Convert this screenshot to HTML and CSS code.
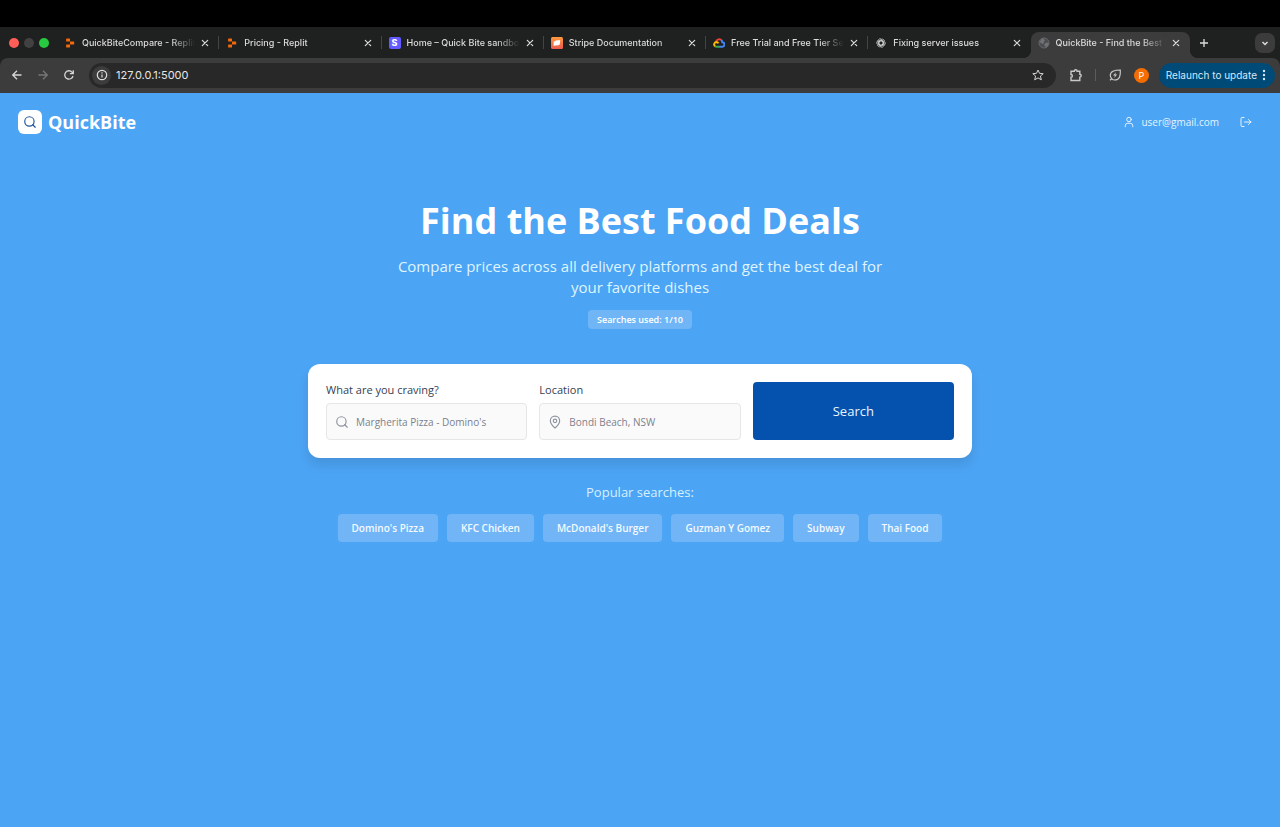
FILE: index.html
```html
<!DOCTYPE html>
<html lang="en">
<head>
<meta charset="utf-8">
<title>QuickBite - Find the Best Food Deals</title>
<link rel="stylesheet" href="styles.css">
</head>
<body>
<svg class="defs" aria-hidden="true">
  <symbol id="close" viewBox="0 0 10 10"><path d="M2.300 2.300l5.400 5.400M7.700 2.300L2.300 7.700" stroke="currentColor" stroke-width="1.200" stroke-linecap="round"/></symbol>
  <symbol id="replit" viewBox="0 0 12 12"><path d="M2.600 1.500h2.900q.5 0 .5.5v2.500H2.600q-.5 0-.5-.5V2q0-.5.5-.5zM6 4.500h3.700q.5 0 .5.500v2q0 .5-.5.5H6zM2.600 7.500H6V10q0 .5-.5.5H2.600q-.5 0-.5-.5V8q0-.5.5-.5z" fill="#f2680c"/></symbol>
  <symbol id="search" viewBox="0 0 24 24"><circle cx="11" cy="11" r="8"/><path d="M21 21l-4.300-4.300"/></symbol>
</svg>
<div class="browser">
  <div class="tabstrip">
    <div class="lights"><i class="light red"></i><i class="light gray"></i><i class="light green"></i></div>
    <div class="tabs">
      <div class="tab"><svg class="fav"><use href="#replit"/></svg><span class="title">QuickBiteCompare - Replit</span><button class="x" aria-label="Close tab"><svg><use href="#close"/></svg></button></div>
      <div class="tab"><svg class="fav"><use href="#replit"/></svg><span class="title">Pricing - Replit</span><button class="x" aria-label="Close tab"><svg><use href="#close"/></svg></button></div>
      <div class="tab"><span class="fav stripe">S</span><span class="title">Home – Quick Bite sandbo</span><button class="x" aria-label="Close tab"><svg><use href="#close"/></svg></button></div>
      <div class="tab"><svg class="fav" viewBox="0 0 12 12"><defs><linearGradient id="og" x2="0" y2="1"><stop stop-color="#ff9a3d"/><stop offset="1" stop-color="#ee5b50"/></linearGradient></defs><rect width="12" height="12" rx="1.500" fill="url(#og)"/><path d="M2.800 4.600l1.600-.3.400-.8 4.400-.4-.4 4.400-1.500.8-4.800.4z" fill="#fff"/></svg><span class="title">Stripe Documentation</span><button class="x" aria-label="Close tab"><svg><use href="#close"/></svg></button></div>
      <div class="tab"><svg class="fav" viewBox="0 0 12 12" fill="none" stroke-width="2"><path d="M3 4.800A3.300 3.300 0 0 1 8 2.900" stroke="#ea4335"/><path d="M8 2.900a3.200 3.200 0 0 1 1.300 2.300A2.200 2.200 0 0 1 9 9.700H6" stroke="#4285f4"/><path d="M6 9.700H3.500A2.300 2.300 0 0 1 2 9.200" stroke="#34a853"/><path d="M2 9.200A2.400 2.400 0 0 1 3.300 5q1.500 0 2.200 1.400" stroke="#fbbc04"/></svg><span class="title">Free Trial and Free Tier Se</span><button class="x" aria-label="Close tab"><svg><use href="#close"/></svg></button></div>
      <div class="tab"><svg class="fav" viewBox="0 0 24 24" fill="none" stroke="#d5d5d5" stroke-width="1.500"><path id="petal" d="M12 7.200l4.200 2.400v6.600l-5 2.900a4.300 4.300 0 0 1-6.300-4"/><use href="#petal" transform="rotate(60 12 12)"/><use href="#petal" transform="rotate(120 12 12)"/><use href="#petal" transform="rotate(180 12 12)"/><use href="#petal" transform="rotate(240 12 12)"/><use href="#petal" transform="rotate(300 12 12)"/></svg><span class="title">Fixing server issues</span><button class="x" aria-label="Close tab"><svg><use href="#close"/></svg></button></div>
      <div class="tab active"><svg class="fav" viewBox="0 0 12 12"><circle cx="6" cy="6" r="5" fill="#4c4d50" stroke="#65676b"/><path d="M1.500 5l2-3 3-.7-.5 1.500 1 .7-1.300 1.300.3 1.200-1.500 1zM7 6.500l1.500-1L11 6.200 9.500 9.500l-2 1.200-.3-1.700-1.200-.8z" fill="#707276"/></svg><span class="title">QuickBite - Find the Best F</span><button class="x" aria-label="Close tab"><svg><use href="#close"/></svg></button></div>
    </div>
    <button class="new" aria-label="New tab"><svg viewBox="0 0 12 12"><path d="M6 2v8M2 6h8" stroke="currentColor" stroke-width="1.300"/></svg></button>
    <button class="list" aria-label="Search tabs"><svg viewBox="0 0 12 12"><path d="M3.500 5L6 7.500 8.500 5" fill="none" stroke="currentColor" stroke-width="1.500"/></svg></button>
  </div>
  <div class="toolbar">
    <button class="nav" aria-label="Back"><svg viewBox="0 0 12 12"><path d="M10.500 6H2M6 1.700L1.700 6 6 10.300"/></svg></button>
    <button class="nav off" aria-label="Forward"><svg viewBox="0 0 12 12"><path d="M1.500 6H10M6 1.700L10.300 6 6 10.300"/></svg></button>
    <button class="nav" aria-label="Reload"><svg viewBox="0 0 12 12"><path d="M10 7a4.200 4.200 0 1 1-.8-3.700L10.200 4.400M10.300 1.200v3.400H6.900"/></svg></button>
    <div class="address">
      <button class="info" aria-label="Site information"><svg viewBox="0 0 12 12"><circle cx="6" cy="6" r="4.700"/><path d="M6 5.500v3M6 3.200v1.200"/></svg></button>
      <input class="url" aria-label="Address" value="127.0.0.1:5000">
      <button class="star" aria-label="Bookmark"><svg viewBox="0 0 12 12"><path d="M6 1l1.500 3.300 3.700.4-2.800 2.400.9 3.700L6 8.900l-3.300 1.900.9-3.700L.8 4.700l3.700-.4z"/></svg></button>
    </div>
    <button class="tool" aria-label="Extensions"><svg viewBox="0 0 14 14"><path d="M2 3.200h3.300a1.400 1.400 0 0 1 2.800 0h2.700v3.100a1.400 1.400 0 0 1 0 2.800v3.400H2V9.300a1.400 1.400 0 0 0 0-2.800z"/></svg></button>
    <span class="rule"></span>
    <button class="tool" aria-label="Energy saver"><svg viewBox="0 0 14 14"><path d="M12.300 2C12.700 8 11.500 12 7 12a4.600 4.600 0 0 1-4.700-4.700C2.300 3.500 6 2 12.300 2zM3.700 10.700L2 12.300" stroke-width="1.200"/><path d="M7.900 4.200L5 7.500h1.900l-.7 2.600 3-3.500H7.300z" fill="currentColor" stroke="none"/></svg></button>
    <span class="avatar">P</span>
    <button class="relaunch">Relaunch to update<svg viewBox="0 0 4 12"><circle cx="2" cy="2" r="1.200"/><circle cx="2" cy="6" r="1.200"/><circle cx="2" cy="10" r="1.200"/></svg></button>
  </div>
</div>
<header class="header">
  <a class="brand" href="#"><span class="mark"><svg class="line"><use href="#search"/></svg></span>QuickBite</a>
  <div class="account">
    <svg class="line" viewBox="0 0 24 24"><circle cx="12" cy="7" r="4.500"/><path d="M19.500 21.500v-2a5 5 0 0 0-5-5h-5a5 5 0 0 0-5 5v2"/></svg>
    <span>user@gmail.com</span>
    <button class="logout" aria-label="Log out"><svg class="line" viewBox="0 0 24 24"><path d="M8 21H4a2 2 0 0 1-2-2V5a2 2 0 0 1 2-2h4M17 17l5-5-5-5M22 12H9"/></svg></button>
  </div>
</header>
<main class="hero">
  <h1>Find the Best Food Deals</h1>
  <p class="lead">Compare prices across all delivery platforms and get the best deal for your favorite dishes</p>
  <span class="badge">Searches used: 1/10</span>
  <form class="card">
    <div class="field">
      <label for="dish">What are you craving?</label>
      <div class="box"><svg class="line"><use href="#search"/></svg><input id="dish" placeholder="Margherita Pizza - Domino's"></div>
    </div>
    <div class="field">
      <label for="place">Location</label>
      <div class="box"><svg class="line" viewBox="0 0 24 24"><path d="M20 10c0 5-5.500 10.200-7.400 11.800a1 1 0 0 1-1.200 0C9.500 20.200 4 15 4 10a8 8 0 0 1 16 0"/><circle cx="12" cy="10" r="3"/></svg><input id="place" placeholder="Bondi Beach, NSW"></div>
    </div>
    <button class="submit" type="button">Search</button>
  </form>
  <p class="popular">Popular searches:</p>
  <div class="chips">
    <button>Domino's Pizza</button><button>KFC Chicken</button><button>McDonald's Burger</button><button>Guzman Y Gomez</button><button>Subway</button><button>Thai Food</button>
  </div>
</main>
</body>
</html>
```
FILE: styles.css
```css
* { box-sizing: border-box; }
body { margin: 0; min-height: 100vh; background: #4ca4f4; color: #fff; font-family: "Open Sans", sans-serif; font-size: 10px; }
button, input { font: inherit; color: inherit; border: 0; padding: 0; background: none; }
button { cursor: pointer; }
h1, p { margin: 0; }
svg { display: block; flex: none; fill: none; }
.defs { position: absolute; width: 0; height: 0; }
.line { stroke: currentColor; stroke-width: 2; stroke-linecap: round; stroke-linejoin: round; }

.browser { background: #1f2020; border-top: 27px solid #000; font-family: Inter, sans-serif; font-size: 10px; color: #dcdcdc; }
.tabstrip { display: flex; align-items: center; height: 31px; padding-right: 5px; }
.lights { display: flex; flex: none; gap: 5px; width: 57px; padding-left: 9px; }
.light { width: 10px; height: 10px; border-radius: 50%; }
.red { background: #ff5f57; }
.gray { background: #414141; }
.green { background: #28c840; }
.tabs { display: flex; flex: 1; align-self: stretch; min-width: 0; font-size: 9px; font-weight: 500; }
.tab { position: relative; display: flex; flex: 51 1 0; align-items: center; min-width: 0; padding: 0 8px 0 7px; }
.tab::after { content: ""; position: absolute; right: 0; top: 9px; width: 1px; height: 13px; background: #434444; }
.tab:nth-child(n+6)::after { display: none; }
.fav { width: 12px; height: 12px; margin-right: 6px; flex: none; }
.stripe { background: #635bff; border-radius: 2px; color: #fff; font-weight: 800; line-height: 12px; text-align: center; }
.title { flex: 1; overflow: hidden; white-space: nowrap; margin-right: 4px; mask-image: linear-gradient(to right, #000 calc(100% - 24px), transparent); }
.x { width: 12px; height: 12px; display: grid; place-items: center; }
.x svg { width: 10px; height: 10px; }
.active { flex-grow: 50; align-self: flex-end; height: 26px; padding-bottom: 5px; background: #3c3c3c; border-radius: 8px 8px 0 0; }
.active::before, .active.active::after { display: block; content: ""; position: absolute; top: auto; bottom: 0; width: 8px; height: 8px; }
.active::before { left: -8px; background: radial-gradient(circle at 0 0, transparent 8px, #3c3c3c 8px); }
.active.active::after { right: -8px; background: radial-gradient(circle at 100% 0, transparent 8px, #3c3c3c 8px); }
.new { margin-left: 8px; }
.new svg, .list svg { width: 12px; height: 12px; }
.list { display: grid; place-items: center; width: 20px; height: 20px; margin-left: 45px; border-radius: 7px; background: #3c3c3c; }
.toolbar { display: flex; align-items: center; height: 35px; padding: 0 5px 1px 11px; background: #3c3c3c; border-radius: 8px 8px 0 0; }
.nav { margin-right: 14px; stroke: #d5d5d5; stroke-width: 1.3; }
.nav svg, .info svg, .star svg { width: 12px; height: 12px; }
.off { stroke: #777; }
.address { display: flex; flex: 1; align-items: center; height: 25px; margin-right: 13px; padding: 0 12px 0 3px; border-radius: 13px; background: #282828; }
.info { display: grid; place-items: center; width: 19px; height: 19px; border-radius: 50%; background: #3c3c3c; stroke: #ddd; stroke-width: 1.2; }
.url { flex: 1; min-width: 0; margin-left: 5px; font-size: 11px; color: #e6e6e6; outline: 0; }
.star { stroke: #d5d5d5; stroke-width: 1; }
.tool { stroke: #c8c8c8; stroke-width: 1.4; color: #c8c8c8; }
.tool svg { width: 14px; height: 14px; }
.rule { width: 1px; height: 12px; margin: 0 12px; background: #5c5c5c; }
.avatar { width: 15px; height: 15px; margin: 0 10px 0 12px; border-radius: 50%; background: #f56c00; color: #fff; font-size: 9px; line-height: 15px; text-align: center; }
.relaunch { display: flex; align-items: center; gap: 5px; height: 25px; padding: 0 9px 0 7px; border-radius: 13px; background: #004a77; color: #d3e9fb; }
.relaunch svg { width: 4px; height: 12px; fill: currentColor; }

.header { display: flex; justify-content: space-between; align-items: center; padding: 17px 28px 18px 18px; }
.brand { display: flex; align-items: center; gap: 6px; color: #fff; font-size: 18px; line-height: 24px; font-weight: 700; text-decoration: none; }
.mark { display: grid; place-items: center; width: 24px; height: 24px; border-radius: 6px; background: #fff; color: #1f5699; }
.mark svg { width: 14px; height: 14px; }
.account { display: flex; align-items: center; gap: 6px; color: #e4f3ff; }
.account svg { width: 12px; height: 12px; }
.logout { margin-left: 15px; }

.hero { display: flex; flex-direction: column; align-items: center; padding: 51px 24px 48px; }
h1 { font-size: 36px; line-height: 36px; font-weight: 700; }
.lead { max-width: 498px; margin-top: 17px; font-size: 15px; line-height: 21px; text-align: center; color: #dff5ff; }
.badge { margin-top: 12px; padding: 0 9px; border-radius: 4px; background: #70b6f6; font-size: 9px; line-height: 19px; font-weight: 600; }
.card { display: grid; grid-template-columns: repeat(3, 1fr); gap: 12px; width: 100%; max-width: 664px; margin-top: 35px; padding: 18px; border-radius: 12px; background: #fff; box-shadow: 0 7px 11px rgba(0, 0, 0, .1); }
.field { display: flex; flex-direction: column; gap: 5px; min-width: 0; }
label { font-size: 11px; line-height: 16px; font-weight: 500; color: #374151; }
.box { display: flex; align-items: center; gap: 7px; height: 37px; padding: 0 9px 0 8px; border: 1px solid #e5e6e8; border-radius: 4px; background: #fafafa; }
.box svg { width: 14px; height: 14px; color: #8e949f; }
.box input { flex: 1; min-width: 0; outline: 0; color: #374151; }
.box input::placeholder { color: #7b818e; opacity: 1; }
.submit { border-radius: 4px; background: #0451ae; color: #e9f5ff; font-size: 13px; font-weight: 500; }
.popular { margin-top: 25px; font-size: 13px; line-height: 18px; color: #d5f0ff; }
.chips { display: flex; flex-wrap: wrap; justify-content: center; gap: 9px; margin-top: 13px; }
.chips button { height: 28px; padding: 0 14px; border-radius: 4px; background: #72b5f7; font-weight: 600; color: #f3faff; }
```
